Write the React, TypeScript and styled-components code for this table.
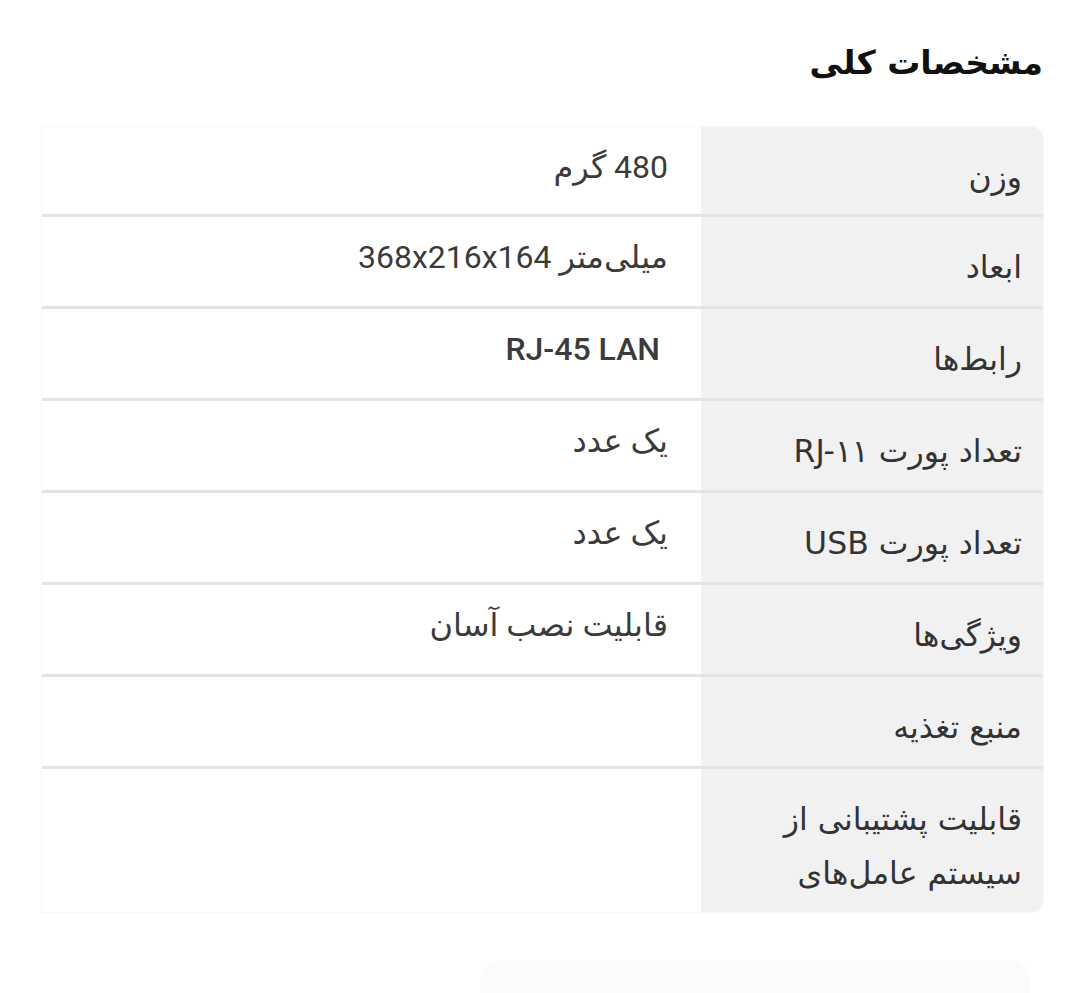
import React, { FC } from 'react';
import styled, { createGlobalStyle } from 'styled-components';

interface ISpec {
  label: string;
  value?: string;
  strong?: boolean;
}

const specs: ISpec[] = [
  { label: 'وزن', value: '480 گرم' },
  { label: 'ابعاد', value: 'میلی‌متر 368x216x164' },
  { label: 'رابط‌ها', value: '\u00A0RJ-45 LAN', strong: true },
  { label: 'تعداد پورت RJ-۱۱', value: 'یک عدد' },
  { label: 'تعداد پورت USB', value: 'یک عدد' },
  { label: 'ویژگی‌ها', value: 'قابلیت نصب آسان' },
  { label: 'منبع تغذیه' },
  { label: 'قابلیت پشتیبانی از سیستم عامل‌های' },
];

const GlobalStyle = createGlobalStyle`
  html, body {
    margin: 0;
    background: #ffffff;
  }
`;

const Page = styled.div`
  direction: rtl;
  width: 1080px;
  height: 993px;
  overflow: hidden;
  box-sizing: border-box;
  padding: 38px 37px 0 37px;
  font-family: "DejaVu Sans", sans-serif;
  background: #fff;
`;

const Title = styled.h2`
  margin: 0;
  font-size: 33px;
  font-weight: 700;
  line-height: 50px;
  color: #111;
`;

const Table = styled.div`
  margin-top: 39px;
  margin-left: 5px;
  border-radius: 0 12px 12px 0;
  overflow: hidden;
  box-shadow: 0 0 0 1px #f8f8f8;
`;

const Row = styled.div<{ $height: number }>`
  display: grid;
  grid-template-columns: 342px 1fr;
  box-sizing: border-box;
  height: ${(p) => p.$height}px;
  border-bottom: 3px solid #e4e4e4;

  &:last-child {
    border-bottom: none;
  }
`;

const Label = styled.div`
  background: #f1f1f1;
  padding: 23px 21px 0 50px;
  font-size: 31.5px;
  line-height: 54px;
  color: #333;
`;

const Value = styled.div<{ $strong?: boolean }>`
  padding: 20px 33px 0 20px;
  font-family: Roboto, "DejaVu Sans", sans-serif;
  font-size: 32px;
  font-weight: ${(p) => (p.$strong ? 500 : 400)};
  line-height: 40px;
  color: #3b3b3b;
`;

const GhostCard = styled.div`
  margin: 48px 13px 0 0;
  width: 550px;
  height: 60px;
  border-radius: 22px;
  background: #fbfbfb;
`;

const rowHeight = (i: number) => {
  if (i === 0) return 90;
  if (i === specs.length - 1) return 143;
  return 92;
};

const App: FC = () => (
  <>
    <GlobalStyle />
    <Page>
      <Title>مشخصات کلی</Title>
      <Table>
        {specs.map((s, i) => (
          <Row key={s.label} $height={rowHeight(i)}>
            <Label>{s.label}</Label>
            <Value $strong={s.strong}>{s.value}</Value>
          </Row>
        ))}
      </Table>
      <GhostCard />
    </Page>
  </>
);

export default App;
